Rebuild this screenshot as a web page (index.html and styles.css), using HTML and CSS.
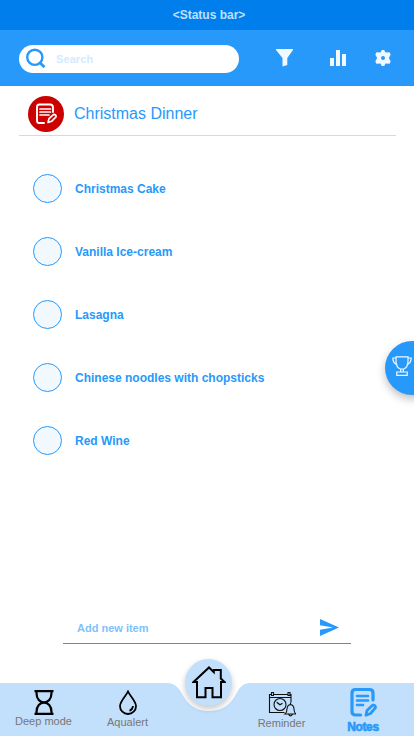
FILE: index.html
```html
<!DOCTYPE html>
<html lang="en">
<head>
<meta charset="utf-8">
<title>Christmas Dinner</title>
<link rel="stylesheet" href="styles.css">
</head>
<body>
<div class="app">
  <div class="status">&lt;Status bar&gt;</div>
  <header class="toolbar">
    <div class="search">
      <svg width="20" height="20" viewBox="0 0 20 20" fill="none" stroke="#2699fb" stroke-width="2.4"><circle cx="8.800" cy="9.300" r="7.600"/><path d="M14 14.700l4.500 4.500" stroke-width="2.800"/></svg>
      <span>Search</span>
    </div>
    <svg class="filter" width="18" height="18" viewBox="0 0 18 18" fill="#f1f9ff"><path d="M0 0h17v1L11.300 9v7L6.500 17.500V9L0 1z"/></svg>
    <svg class="chart" width="16" height="16" viewBox="0 0 16 16" fill="#f1f9ff"><path d="M0 8h4v8H0zM6 0h4v16H6zM12 4h4v12h-4z"/></svg>
    <svg class="gear" width="16" height="16" viewBox="0 0 16 16" fill="#f1f9ff" fill-rule="evenodd"><path d="M6.800 0h2.400l1.300 2.500 4-.2 1.200 2.200L13.900 8l1.800 3.500-1.200 2.200-4-.2L9.200 16H6.800l-1.300-2.500-4 .2L.3 11.500 2.100 8 .3 4.500l1.200-2.200 4 .2zM8 6a2 2 0 1 0 0 4 2 2 0 0 0 0-4z"/></svg>
  </header>
  <div class="heading">
    <div class="note-badge">
      <svg width="22" height="22" viewBox="0 0 22 22" fill="none" stroke="#fff" stroke-linecap="round" stroke-linejoin="round"><path d="M18 9V4.500Q18 1.500 15 1.500H4.500Q2 1.500 2 4v13.500q0 2.500 2 2.500H9" stroke-width="1.900"/><path d="M5 6h10.500M5 9h10.500M5 12h9" stroke-width="1.700"/><path d="M13 19.500l1-3.900 4.700-4.300q2.600.2 2.300 2.500L16.800 18.200z" stroke-width="1.700"/></svg>
    </div>
    <h1>Christmas Dinner</h1>
  </div>
  <ul class="items">
    <li><i class="check"></i>Christmas Cake</li>
    <li><i class="check"></i>Vanilla Ice-cream</li>
    <li><i class="check"></i>Lasagna</li>
    <li><i class="check"></i>Chinese noodles with chopsticks</li>
    <li><i class="check"></i>Red Wine</li>
  </ul>
  <div class="trophy">
    <svg width="20" height="20" viewBox="0 0 20 20" fill="none" stroke="#f1f9ff" stroke-width="1.200"><path d="M4 .8h12v4q0 7-4.500 8.200h-3Q4 11.800 4 4.800zM4 2H.8q0 5 4.700 7.200M16 2h3.200q0 5-4.700 7.200M8.700 13v3M11.300 13v3M6.500 16h7M4.800 16v3.300h10.400V16z"/></svg>
  </div>
  <div class="add">
    <span>Add new item</span>
    <svg width="19" height="17" viewBox="0 0 19 17" fill="#2699fb"><path d="M0 0l19 8.500L0 17v-6.300l13-2.200L0 6.300z"/></svg>
  </div>
  <nav class="tabs">
    <svg class="tabs-bg" width="414" height="53" viewBox="0 0 414 53"><path fill="#c2dffb" d="M0 0H167Q176 0 181 9C188 23 197 28 209 28C221 28 229 23 235 13C239 6 241 0 251 0H414V53H0z"/></svg>
    <div class="tab deep">
      <svg width="20" height="25" viewBox="0 0 20 25" fill="none" stroke="#000" stroke-width="2.200"><path d="M.5 1.200h19M.5 23.800h19"/><path d="M2.500 1v2C2.500 9 6 12.400 10 12.400S17.500 9 17.500 3V1M2.500 24v-2C2.500 16 6 12.600 10 12.600S17.500 16 17.500 22v2"/></svg>
      <span>Deep mode</span>
    </div>
    <div class="tab aqua">
      <svg width="18" height="25" viewBox="0 0 18 25" fill="none" stroke="#000" stroke-width="1.800"><path d="M9 1.500C7 6 1 11 1 16.200a8 7.800 0 0 0 16 0C17 11 11 6 9 1.500z"/><path d="M14 16q-.3 3.500-3.500 4.800"/></svg>
      <span>Aqualert</span>
    </div>
    <div class="home">
      <svg width="34" height="34" viewBox="0 0 34 34" fill="none" stroke="#000" stroke-width="2"><path d="M1.500 16L17 1.500l4.800 4.700V4h7v8.500l3.700 3.500H29v15.200h-8.500V22h-7v9.200H5V16z"/></svg>
    </div>
    <div class="tab reminder">
      <svg width="28" height="26" viewBox="0 0 28 26" fill="none" stroke="#111" stroke-width="1.100"><path d="M16.500 21.500H1.500v-18h2M5.500 3.500h14M22 3.500h1v8M1.500 6.500H23M3.500 1.500h2v3h-2zM20 1.500h2v3h-2z"/><circle cx="12" cy="13.500" r="6"/><path d="M8.700 11.200l3.300 2.500 2.500-1.500" stroke-width="1.300"/><path d="M17 23q2-1.500 2-5 .2-4 3.500-4.500 3.300.5 3.500 4.500 0 3.500 2 5zM20.500 23.300q2 3.200 4 0M22.500 11.500v2"/></svg>
      <span>Reminder</span>
    </div>
    <div class="tab notes">
      <svg width="28" height="30" viewBox="0 0 28 30" fill="none" stroke="#2699fb" stroke-linecap="round" stroke-linejoin="round"><path d="M24 13V6q0-3.500-3.500-3.500h-14Q3 2.500 3 6v18.500Q3 28 6.500 28H11.500" stroke-width="3.200"/><path d="M8 9h11M8 13.500h11M8 18h6" stroke-width="2.600"/><path d="M17 28.300l1-4.800 5.500-5.300q3-.5 3 2.500L21.500 26.500z" stroke-width="2.800"/></svg>
      <span>Notes</span>
    </div>
  </nav>
</div>
</body>
</html>
```
FILE: styles.css
```css
* { box-sizing: border-box; }
body { margin: 0; font-family: "Liberation Sans", Arial, sans-serif; background: #fff; }
svg { display: block; flex: none; }
.app { position: relative; display: flex; flex-direction: column; width: 414px; height: 736px; overflow: hidden; }
.status { height: 30px; line-height: 30px; padding-left: 4px; text-align: center; font-size: 12px; font-weight: bold; color: #bce0fd; background: #007fec; }
.toolbar { display: flex; align-items: center; height: 56px; padding: 0 23px 0 19px; background: #2699fb; }
.search { display: flex; align-items: center; gap: 10px; width: 220px; height: 28px; margin-top: 2px; padding-left: 7px; border-radius: 14px; background: #fff; font-size: 11px; font-weight: bold; color: #d2ebff; }
.search svg { margin-top: -2px; }
.search span { margin-top: -1px; letter-spacing: .1px; }
.filter { margin-left: 37px; }
.chart { margin-left: 36px; }
.gear { margin-left: 29px; }
.heading { display: flex; align-items: center; gap: 10px; height: 50px; margin: 0 18px 0 19px; padding: 6px 0 0 9px; border-bottom: 1px solid #bce0fd; }
.note-badge { display: grid; place-items: center; width: 36px; height: 36px; margin-bottom: -1px; align-self: flex-start; margin-top: 4px; border-radius: 50%; background: radial-gradient(#d60000, #c50000); }
h1 { margin: 0; font-size: 16px; font-weight: normal; color: #2699fb; }
.items { display: flex; flex-direction: column; gap: 34px; margin: 38px 0 0; padding: 0 0 0 33px; list-style: none; font-size: 12px; font-weight: bold; color: #2699fb; }
.items li { display: flex; align-items: center; gap: 13px; height: 29px; }
.check { width: 29px; height: 29px; border: 1px solid #2699fb; border-radius: 50%; background: #f1f9ff; }
.trophy { position: absolute; left: 385px; top: 341px; width: 54px; height: 54px; padding: 15px 0 0 7px; border-radius: 50%; background: #2699fb; box-shadow: 0 4px 8px rgba(0, 0, 0, .25); }
.add { display: flex; justify-content: space-between; align-items: center; height: 33px; margin: auto 63px 39px; padding: 0 12px 0 14px; border-bottom: 1px solid #2699fb; font-size: 11px; font-weight: bold; color: #7dc2fd; }
.add span { padding-top: 2px; }
.tabs { position: relative; display: grid; grid-template-columns: 87px 81px 81px 65px 98px; height: 53px; font-size: 11px; color: #777; }
.tabs-bg { position: absolute; inset: 0; }
.tab { position: relative; display: flex; flex-direction: column; align-items: center; line-height: 13px; white-space: nowrap; }
.deep { padding-top: 7px; }
.aqua { padding-top: 7px; }
.aqua span { margin-top: 1px; }
.reminder { padding-top: 8px; }
.notes { padding-top: 4px; font-size: 12px; font-weight: bold; color: #2699fb; }
.notes svg { margin-left: -1px; }
.notes span { margin-top: 4px; letter-spacing: -.4px; -webkit-text-stroke: .6px #2699fb; }
.home { position: relative; display: grid; place-items: center; justify-self: center; width: 47px; height: 47px; margin-top: -24px; border-radius: 50%; background: #c2dffb; box-shadow: 0 3px 6px rgba(0, 0, 0, .22); }
```
